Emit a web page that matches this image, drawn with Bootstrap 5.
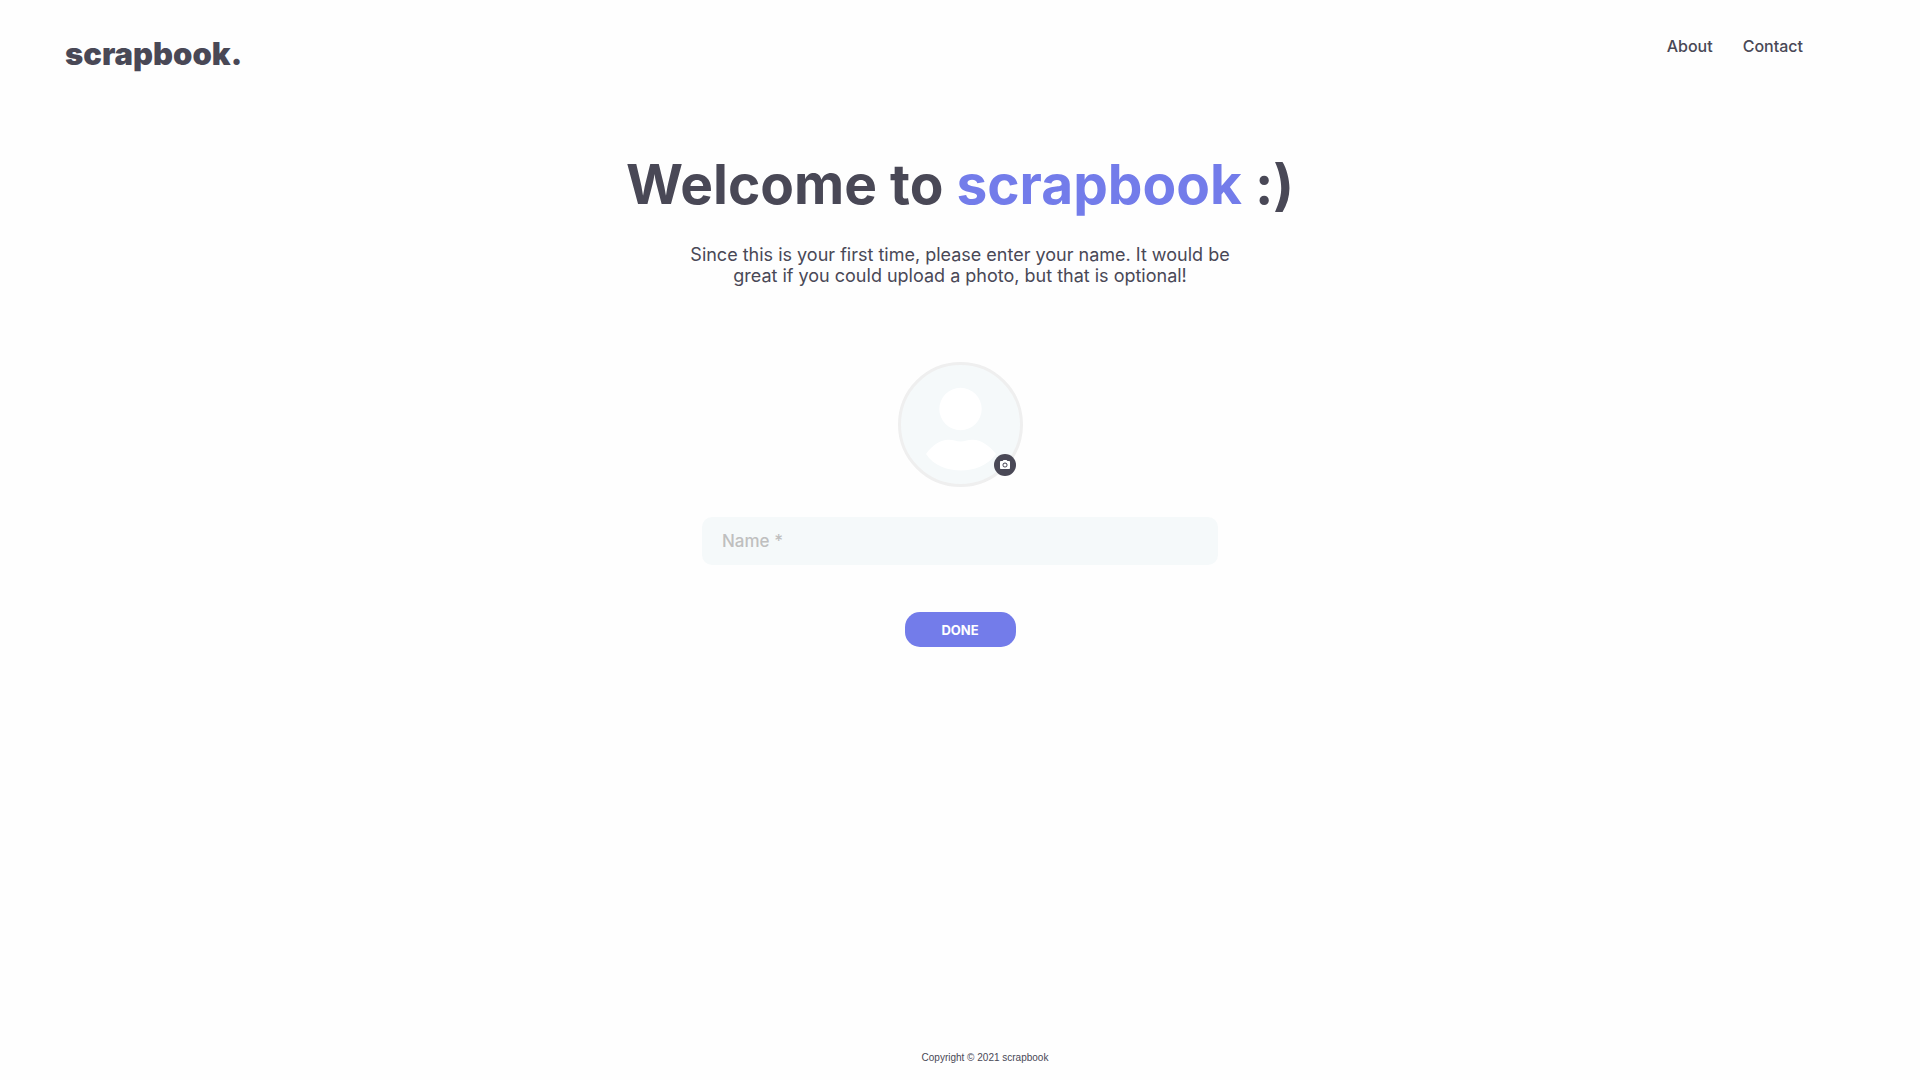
<!DOCTYPE html>
<html lang="en">
<head>
<meta charset="utf-8">
<meta name="viewport" content="width=device-width, initial-scale=1">
<title>scrapbook.</title>
<link rel="stylesheet" href="https://cdn.jsdelivr.net/npm/bootstrap@5.3.0/dist/css/bootstrap.min.css">
<style>
  body { font-family: Inter, sans-serif; color: #494856; background: #fefefe; }
  .site-bar { padding: 36px 117px 0 65px; }
  .brand { font-size: 31px; line-height: 36px; font-weight: 900; color: #494856; }
  .site-links { gap: 30px; font-size: 16px; line-height: 20px; }
  .site-links a { color: #494856; font-weight: 500; }
  .welcome-title { margin: 78px 0 26px; font-size: 55px; line-height: 68px; font-weight: 700; }
  .accent { color: #737cea; }
  .intro { max-width: 560px; margin-bottom: 76px; font-size: 18px; line-height: 21px; }
  .name-form { width: 100%; max-width: 516px; }
  .avatar { width: 125px; height: 125px; margin-bottom: 30px; }
  .avatar-face { background: #f5f9fa; border: 3px solid #efefef; }
  .photo-btn { right: 7px; bottom: 11px; width: 22px; height: 22px; background: #494856; cursor: pointer; }
  .name-input { height: 48px; margin-bottom: 47px; padding: 0 20px; border: 0; border-radius: 10px; background: #f5f9fa; font-size: 17px; font-weight: 500; }
  .name-input:focus { background: #f5f9fa; }
  .name-input::placeholder { color: #bfbfbf; }
  .done-btn { width: 111px; height: 35px; padding: 2px 0 0; border: 0; border-radius: 15px; background: #737cea; color: #fff; font-size: 13px; font-weight: 700; }
  .done-btn:hover { background: #626bd8; color: #fff; }
  .site-foot { padding: 0 0 16px 50px; font: 10px/12px "Liberation Sans", sans-serif; }
</style>
</head>
<body class="d-flex flex-column min-vh-100">
  <header class="site-bar d-flex justify-content-between align-items-start">
    <a class="brand text-decoration-none" href="#">scrapbook.</a>
    <nav class="site-links d-flex" aria-label="Main">
      <a class="text-decoration-none" href="#about">About</a>
      <a class="text-decoration-none" href="#contact">Contact</a>
    </nav>
  </header>

  <main class="flex-grow-1 d-flex flex-column align-items-center text-center px-3">
    <h1 class="welcome-title">Welcome to <span class="accent">scrapbook</span> :)</h1>
    <p class="intro">Since this is your first time, please enter your name. It would be great if you could upload a photo, but that is optional!</p>

    <form class="name-form d-flex flex-column align-items-center">
      <div class="avatar position-relative">
        <svg class="avatar-face d-block w-100 h-100 rounded-circle" viewBox="0 0 119 119" aria-hidden="true">
          <circle cx="59.500" cy="44" r="21.200" fill="#fff"/>
          <path d="M25 89C32 79 40 75 47 74.700C52 74.500 55 76.400 59.700 76.400C64.500 76.400 67 74.500 72 74.700C80 75 88 80 95 89C86 101 73 105.500 60 105.500S33 101 25 89Z" fill="#fff"/>
        </svg>
        <label class="photo-btn position-absolute rounded-circle d-flex align-items-center justify-content-center" for="photo">
          <svg width="12" height="12" viewBox="0 0 24 24" fill="#fff" role="img" aria-label="Upload a photo">
            <circle cx="12" cy="12" r="3.200"/>
            <path d="M9 2L7.170 4H4c-1.100 0-2 .9-2 2v12c0 1.100.9 2 2 2h16c1.100 0 2-.9 2-2V6c0-1.100-.9-2-2-2h-3.170L15 2H9zm3 15c-2.760 0-5-2.240-5-5s2.240-5 5-5 5 2.240 5 5-2.240 5-5 5z"/>
          </svg>
        </label>
        <input class="d-none" type="file" id="photo" accept="image/*">
      </div>
      <input class="name-input form-control shadow-none" type="text" id="name" aria-label="Name" placeholder="Name *" required>
      <button class="done-btn btn" type="submit">DONE</button>
    </form>
  </main>

  <footer class="site-foot text-center">Copyright © 2021 scrapbook</footer>
  <script src="https://cdn.jsdelivr.net/npm/bootstrap@5.3.0/dist/js/bootstrap.bundle.min.js"></script>
</body>
</html>
